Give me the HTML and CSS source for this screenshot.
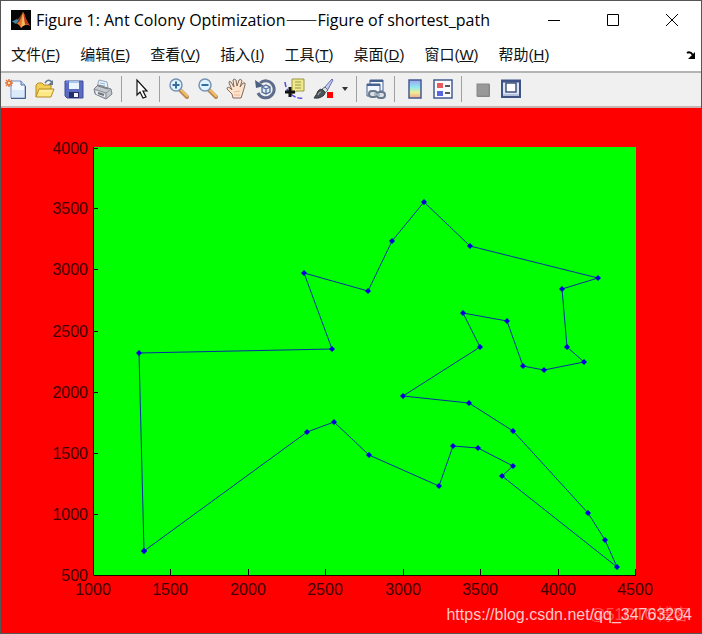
FILE: index.html
```html
<!DOCTYPE html>
<html lang="zh-CN">
<head>
<meta charset="utf-8">
<title>Figure 1</title>
<link rel="stylesheet" href="styles.css">
</head>
<body>
<div class="window">
  <header class="titlebar">
    <svg class="logo" viewBox="0 0 20 20" aria-hidden="true">
      <rect width="20" height="20" fill="#050505"/>
      <path d="M1 11.500L6 9L8 10.500L5 14Z" fill="#3f86a8"/>
      <path d="M6 9Q8 8.500 9 6.500L12 2L10 10Q8 14 5 14L8 10.500Z" fill="#7d3a22"/>
      <path d="M12 2Q14 5 15 9Q17 13 19 16Q16 14 14 15Q11 16 10 18Q9 15 6 13.500Q9 12 10 8Z" fill="#e8742a"/>
      <path d="M12 2Q13 4 13.500 8Q14 12 14 15Q11 16 10 18L11 11Z" fill="#f9b95c"/>
      <path d="M12 2Q14 5 15 9Q17 13 19 16Q16 13 14 14Z" fill="#b8361c"/>
    </svg>
    <h1 class="title">Figure 1: Ant Colony Optimization<span class="dash">——</span>Figure of shortest_path</h1>
    <div class="controls">
      <button class="control" type="button" aria-label="Minimize"><svg viewBox="0 0 12 12"><path d="M0 6.500H12"/></svg></button>
      <button class="control" type="button" aria-label="Maximize"><svg viewBox="0 0 12 12"><path d="M.5.500H11.500V11.500H.5Z"/></svg></button>
      <button class="control" type="button" aria-label="Close"><svg viewBox="0 0 12 12"><path d="M0 0L12 12M12 0L0 12"/></svg></button>
    </div>
  </header>
  <nav class="menubar">
    <button class="menu" type="button">文件(<u>F</u>)</button>
    <button class="menu" type="button">编辑(<u>E</u>)</button>
    <button class="menu" type="button">查看(<u>V</u>)</button>
    <button class="menu" type="button">插入(<u>I</u>)</button>
    <button class="menu" type="button">工具(<u>T</u>)</button>
    <button class="menu" type="button">桌面(<u>D</u>)</button>
    <button class="menu" type="button">窗口(<u>W</u>)</button>
    <button class="menu" type="button">帮助(<u>H</u>)</button>
    <button class="dock" type="button" aria-label="Dock figure"><svg viewBox="0 0 10 8"><path d="M1 2Q4 0 7 4" fill="none" stroke="#000" stroke-width="2"/><path d="M9 1V8H2Z"/></svg></button>
  </nav>
  <div class="toolbar" role="toolbar">
    <button class="tool" type="button" aria-label="New figure"><svg viewBox="0 0 24 24">
      <path d="M7 4H17L21 8V21H7Z" fill="#f4f9ff" stroke="#6f8fc4"/><path d="M8 13H20V20H8Z" fill="#dce9f8"/><path d="M17 4V8H21" fill="#c5d7ef" stroke="#55739f"/><path d="M7 21.500H21.500V9" fill="none" stroke="#46618f"/>
      <path d="M5 2V10M1 6H9M2 3L8 9M8 3L2 9" stroke="#e87a42" stroke-width="1.500"/><circle cx="5" cy="6" r="2" fill="#ffe0a8" stroke="#d95c27"/></svg></button>
    <button class="tool" type="button" aria-label="Open file"><svg viewBox="0 0 24 24">
      <path d="M3 20V8L5 6H9L11 8H18V12" fill="#f3cf56" stroke="#b68b25"/><path d="M3 20L6 12H21L18 20Z" fill="#ffe884" stroke="#b68b25"/><path d="M6 14H19" stroke="#fff7bb"/><path d="M12 6Q15 1 19 5" fill="none" stroke="#66788f" stroke-width="1.500"/><path d="M20 3V8H15Z" fill="#66788f"/></svg></button>
    <button class="tool" type="button" aria-label="Save figure"><svg viewBox="0 0 24 24">
      <path d="M3 4H21V21H5L3 19Z" fill="#5a6cc4" stroke="#3f4c96"/><path d="M7 4H17V12H7Z" fill="#eaf4ff"/><path d="M7 4H17V6H7Z" fill="#a7c6ee"/><path d="M7 15H17V21H7Z" fill="#252e69"/><path d="M12 16H16V20H12Z" fill="#f5f6ff"/><path d="M4 5H6" stroke="#92a5ec"/></svg></button>
    <button class="tool" type="button" aria-label="Print figure"><svg viewBox="0 0 24 24">
      <path d="M6 10L8 3L16 5L17 11Z" fill="#eaf5ff" stroke="#8ea4ba"/><path d="M9 6L14 7M8 8L14 9" stroke="#9cb6cf"/><path d="M3 12L7 8L20 12L21 17L15 22L4 17Z" fill="#c5c9ce" stroke="#777f89"/><path d="M3 12L15 16L20 12M15 16V21" fill="none" stroke="#8b929b"/><path d="M5 14L14 17V20L5 17Z" fill="#eceff1"/><path d="M7 16L13 18" stroke="#6d747c" stroke-width="2"/><path d="M7 9L17 12" stroke="#777"/></svg></button>
    <span class="separator"></span>
    <button class="tool" type="button" aria-label="Edit plot"><svg viewBox="0 0 24 24"><path d="M8 3V18L11 15L14 21L17 20L14 14H18Z" fill="#fff" stroke="#111" stroke-width="1.200"/></svg></button>
    <span class="separator"></span>
    <button class="tool" type="button" aria-label="Zoom in"><svg viewBox="0 0 24 24"><path d="M13 13L20 20" stroke="#b98a5a" stroke-width="4" stroke-linecap="round"/><path d="M14 13L20 19" stroke="#f5bf62" stroke-width="2" stroke-linecap="round"/><circle cx="9" cy="8" r="6" fill="#dff4ff" stroke="#7793b3" stroke-width="1.500"/><path d="M5.500 8H12.500M9 4.500V11.500" stroke="#356c9f" stroke-width="2"/></svg></button>
    <button class="tool" type="button" aria-label="Zoom out"><svg viewBox="0 0 24 24"><path d="M13 13L20 20" stroke="#b98a5a" stroke-width="4" stroke-linecap="round"/><path d="M14 13L20 19" stroke="#f5bf62" stroke-width="2" stroke-linecap="round"/><circle cx="9" cy="8" r="6" fill="#dff4ff" stroke="#7793b3" stroke-width="1.500"/><path d="M5.500 8H12.500" stroke="#356c9f" stroke-width="2"/></svg></button>
    <button class="tool" type="button" aria-label="Pan"><svg viewBox="0 0 24 24"><path d="M8 21L7 17L2 12Q2 9 5 11L7 13L4 6Q4 3 6 5L9 10L8 3Q9 1 11 3L12 9L14 3Q16 1 17 4L15 10L18 6Q21 5 20 8L18 15L16 21Z" fill="#ffe4cd" stroke="#806b60"/><path d="M9 15L15 14M9 18L15 18" stroke="#e9b991"/></svg></button>
    <button class="tool" type="button" aria-label="Rotate 3D"><svg viewBox="0 0 24 24"><path d="M6 6A8.500 8.500 0 1 1 4 16" fill="none" stroke="#5c6c8a" stroke-width="3"/><path d="M1 3L2 11L10 9Z" fill="#4b5f80"/><path d="M8 10L12 8L16 10V15L12 17L8 15ZM8 10L12 12L16 10M12 12V17" fill="#e2ecfb" stroke="#526c9b" stroke-width="1.300"/></svg></button>
    <button class="tool" type="button" aria-label="Data cursor"><svg viewBox="0 0 24 24"><path d="M2 5Q3 14 9 18T20 21" fill="none" stroke="#5145e4" stroke-width="1.500" stroke-dasharray="5 2"/><path d="M9 2H21V14H14L9 17Z" fill="#eee98b" stroke="#9b9547"/><path d="M12 5H18M12 8H18M12 11H18" stroke="#9c9751"/><path d="M7 10V20M2 15H12" stroke="#111" stroke-width="3"/></svg></button>
    <button class="tool" type="button" aria-label="Brush data"><svg viewBox="0 0 24 24"><path d="M12 11L20 2L21 3L15 14Z" fill="#c6cdf5" stroke="#6970a8"/><path d="M10 12L13 10L16 13L13 16Z" fill="#d8dde2" stroke="#687178"/><path d="M2 21Q5 17 6 14Q8 11 11 13Q15 16 11 19Q7 22 2 21Z" fill="#4c5459" stroke="#343b3f"/><path d="M6 18Q7 15 9 15" fill="none" stroke="#afb8bd"/><rect x="15" y="15" width="6" height="6" fill="#f00"/></svg></button>
    <button class="tool tool-narrow" type="button" aria-label="Brush options"><svg viewBox="0 0 6 4"><path d="M0 0H6L3 4Z" fill="#333"/></svg></button>
    <span class="separator"></span>
    <button class="tool" type="button" aria-label="Link plot"><svg viewBox="0 0 24 24"><path d="M6 3H19V14H6Z" fill="#f6faff" stroke="#45618f"/><path d="M6 4H19" stroke="#45618f" stroke-width="2"/><path d="M3 7H16V19H3Z" fill="#f2f7ff" stroke="#45618f"/><path d="M3 8H16" stroke="#45618f" stroke-width="2"/><rect x="5" y="14" width="8" height="6" rx="3" fill="#dae1e9" stroke="#66788c" stroke-width="2"/><rect x="13" y="15" width="8" height="6" rx="3" fill="#dae1e9" stroke="#66788c" stroke-width="2"/><path d="M10 17L16 18" stroke="#a7b4c1" stroke-width="2"/></svg></button>
    <span class="separator"></span>
    <button class="tool" type="button" aria-label="Insert colorbar"><svg viewBox="0 0 24 24"><defs><linearGradient id="bar" x2="0" y2="1"><stop stop-color="#9da1f2"/><stop offset=".4" stop-color="#8eeaf0"/><stop offset=".7" stop-color="#efec93"/><stop offset="1" stop-color="#f4a48b"/></linearGradient></defs><path d="M7 3H19V21H7Z" fill="url(#bar)" stroke="#455b91" stroke-width="1.500"/></svg></button>
    <button class="tool" type="button" aria-label="Insert legend"><svg viewBox="0 0 24 24"><path d="M3 3H21V21H3Z" fill="#fbfcff" stroke="#455b91" stroke-width="1.500"/><rect x="6" y="6" width="6" height="5" fill="#e95b5b"/><rect x="6" y="14" width="6" height="5" fill="#5967df"/><path d="M14 9H19M14 16H19" stroke="#222" stroke-width="1.500"/></svg></button>
    <span class="separator"></span>
    <button class="tool" type="button" aria-label="Hide plot tools"><svg viewBox="0 0 24 24"><rect x="8" y="7" width="13" height="13" rx="1" fill="#858585"/><rect x="8" y="7" width="12" height="12" fill="#999" stroke="#888"/></svg></button>
    <button class="tool" type="button" aria-label="Show plot tools"><svg viewBox="0 0 24 24"><path d="M4 4H22V20H4Z" fill="#dce6f4" stroke="#405386" stroke-width="2"/><path d="M3 4H23" stroke="#405386" stroke-width="3"/><path d="M8 6H18V15H8Z" fill="#fff" stroke="#405386" stroke-width="1.500"/><path d="M5 18H21" stroke="#8b9fc1"/></svg></button>
  </div>
  <main class="figure">
    <svg class="plot" viewBox="1 108 700 525" role="img" aria-label="Shortest path">
      <defs><marker id="dot" markerUnits="userSpaceOnUse" markerWidth="6" markerHeight="6" refX="3" refY="3"><path d="M3 0L6 3L3 6L0 3Z" fill="#00d"/></marker></defs>
      <rect class="axes" x="93" y="147" width="543" height="429"/>
      <path class="axis" d="M93.500 147V575.500H635.500M93 148.500h5M93 208.500h5M93 269.500h5M93 331.500h5M93 392.500h5M93 453.500h5M93 514.500h5M170.500 575v-6M248.500 575v-6M325.500 575v-6M403.500 575v-6M480.500 575v-6M558.500 575v-6M635.500 576v-7"/>
      <polyline class="route" points="144,551 139,353 332,349 304,273 368,291 392,241 424,202 470,246 598,278 562,289 567,347 584,362 544,370 523,366 507,321 463,313 480,347 403,396 469,403 513,431 588,513 605,540 617,567 502,476 513,466 478,448 453,446 439,486 369,455 334,422 307,432 144,551"/>
      <g class="tick tick-y">
        <text x="88" y="154">4000</text><text x="88" y="214">3500</text><text x="88" y="275">3000</text><text x="88" y="337">2500</text><text x="88" y="398">2000</text><text x="88" y="459">1500</text><text x="88" y="520">1000</text><text x="88" y="581">500</text>
      </g>
      <g class="tick tick-x">
        <text x="93" y="595">1000</text><text x="170" y="595">1500</text><text x="248" y="595">2000</text><text x="325" y="595">2500</text><text x="403" y="595">3000</text><text x="480" y="595">3500</text><text x="558" y="595">4000</text><text x="635" y="595">4500</text>
      </g>
    </svg>
    <div class="watermark watermark-faint">@51CTO博客</div>
    <div class="watermark">https://blog.csdn.net/qq_34763204</div>
  </main>
</div>
</body>
</html>
```
FILE: styles.css
```css
* { box-sizing: border-box; }

body { margin: 0; }

button {
  margin: 0;
  padding: 0;
  border: 0;
  background: none;
  color: inherit;
  font: inherit;
}

.window {
  display: flex;
  flex-direction: column;
  min-height: 100vh;
  border: 1px solid #555;
  background: #fff;
  color: #111;
}

.titlebar {
  display: flex;
  align-items: center;
  height: 37px;
  padding-left: 10px;
}

.logo { width: 20px; height: 20px; flex: none; }

.title {
  margin: 0 0 0 5px;
  font: 400 16px/20px "Open Sans", "Noto Sans CJK SC", sans-serif;
  white-space: nowrap;
  color: #000;
}

.dash { font-family: "Noto Sans CJK SC", sans-serif; }

.controls { display: flex; margin-left: auto; }

.control {
  display: flex;
  align-items: center;
  justify-content: center;
  width: 59px;
  height: 37px;
}

.control svg {
  width: 12px;
  height: 12px;
  fill: none;
  stroke: #000;
}

.menubar {
  display: flex;
  align-items: center;
  gap: 20px;
  height: 33px;
  padding: 0 5px 0 10px;
  font: 400 15px/20px "Liberation Sans", "Noto Sans CJK SC", sans-serif;
}

.menu { white-space: nowrap; }

.dock { display: flex; margin-left: auto; }
.dock svg { width: 10px; height: 8px; }

.toolbar {
  display: flex;
  align-items: center;
  height: 37px;
  padding-bottom: 2px;
  border-top: 2px solid #b4b4b4;
  border-bottom: 2px solid #c8b4b4;
  background: #f0f0f0;
}

.tool {
  display: flex;
  align-items: center;
  justify-content: center;
  width: 29px;
  height: 28px;
}

.tool svg { width: 24px; height: 24px; fill: none; }

.tool-narrow { width: 14px; }
.tool-narrow svg { width: 6px; height: 4px; }

.separator {
  width: 9px;
  height: 26px;
  background: linear-gradient(#a0a0a0, #a0a0a0) center / 1px 100% no-repeat;
}

.figure { position: relative; flex: 1; background: #f00; }

.plot { display: block; width: 100%; height: auto; }

.axes { fill: #0f0; }
.axis { fill: none; stroke: #200; }

.route {
  fill: none;
  stroke: #0030a0;
  marker: url(#dot);
}

.tick { font: 16px "Liberation Sans", sans-serif; fill: #400000; }
.tick-y { text-anchor: end; }
.tick-x { text-anchor: middle; }

.watermark {
  position: absolute;
  right: 9px;
  bottom: 8px;
  font: 16px/20px "Liberation Sans", "Noto Sans CJK SC", sans-serif;
  color: #ffc8c8;
}

.watermark-faint { right: 12px; color: #ff5050; }
```
